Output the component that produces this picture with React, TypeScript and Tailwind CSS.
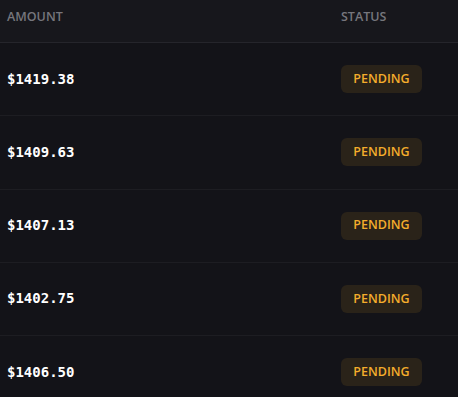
const rows = ["$1419.38", "$1409.63", "$1407.13", "$1402.75", "$1406.50"];

export default function App() {
  return (
    <div className="h-[397px] w-[458px] overflow-hidden bg-[#131318]" style={{ fontFamily: '"Open Sans", "Noto Sans", sans-serif' }}>
      <div className="flex h-[43px] border-b border-[#25252b] bg-[#17171c] pt-[8px] text-[12.5px] font-semibold uppercase leading-[18px] text-[#76767d]">
        <div className="w-[341px] pl-[7px]">Amount</div>
        <div>Status</div>
      </div>
      {rows.map((amount) => (
        <div key={amount} className="flex h-[73.25px] items-center border-b border-[#1d1d22]">
          <div className="w-[341px] pl-[7px] font-['DejaVu_Sans_Mono',monospace] text-[14px] font-bold text-white">
            {amount}
          </div>
          <span className="flex h-[28px] w-[81px] items-center justify-center rounded-md bg-[#2a2319] text-[12.5px] font-semibold text-[#f4ad2c]">
            PENDING
          </span>
        </div>
      ))}
    </div>
  );
}
